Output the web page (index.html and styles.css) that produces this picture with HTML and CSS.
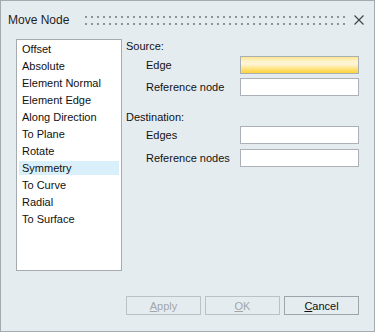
FILE: index.html
```html
<!DOCTYPE html>
<html lang="en">

<head>
    <meta charset="UTF-8">
    <meta name="viewport" content="width=device-width, initial-scale=1.0">
    <title>Move Node</title>
    <link rel="stylesheet" href="styles.css">
</head>

<body>
    <div class="dialog">
        <!-- Title bar with drag grip -->
        <div class="titlebar">
            <span class="title">Move Node</span>
            <div class="grip">
                <div class="grip-row"></div>
                <div class="grip-row"></div>
            </div>
            <button class="close" aria-label="Close">
                <svg width="10" height="10" viewBox="0 0 10 10">
                    <path d="M0.5 0.5 L9.5 9.5 M9.5 0.5 L0.5 9.5" stroke="#3c4247" stroke-width="1.1" fill="none" />
                </svg>
            </button>
        </div>

        <div class="body">
            <ul class="methods">
                <li>Offset</li>
                <li>Absolute</li>
                <li>Element Normal</li>
                <li>Element Edge</li>
                <li>Along Direction</li>
                <li>To Plane</li>
                <li>Rotate</li>
                <li class="selected">Symmetry</li>
                <li>To Curve</li>
                <li>Radial</li>
                <li>To Surface</li>
            </ul>

            <div class="form">
                <div class="group-label">Source:</div>
                <div class="field first">
                    <label>Edge</label>
                    <input type="text" class="active">
                </div>
                <div class="field">
                    <label>Reference node</label>
                    <input type="text">
                </div>

                <div class="group-label dest">Destination:</div>
                <div class="field first-dest">
                    <label>Edges</label>
                    <input type="text">
                </div>
                <div class="field last">
                    <label>Reference nodes</label>
                    <input type="text">
                </div>
            </div>
        </div>

        <div class="footer">
            <button class="btn" disabled><u>A</u>pply</button>
            <button class="btn" disabled><u>O</u>K</button>
            <button class="btn"><u>C</u>ancel</button>
        </div>
    </div>
</body>

</html>
```

FILE: styles.css
```css
body {
    margin: 0;
    font-family: "Liberation Sans", Arial, sans-serif;
    font-size: 11px;
    color: #111;
}

.dialog {
    width: 375px;
    height: 332px;
    box-sizing: border-box;
    border: 1px solid #a3abb1;
    background-color: #e5ecf0;
}

.titlebar {
    display: flex;
    align-items: center;
    height: 38px;
    padding-left: 7px;
}

.title {
    font-size: 12px;
    color: #1e1e1e;
    width: 63px;
}

.grip {
    display: flex;
    flex-direction: column;
    gap: 5px;
    width: 262px;
    margin-left: 14px;
    margin-top: 1px;
}

.grip-row {
    height: 2px;
    background: repeating-linear-gradient(90deg, #8c9399 0 2px, transparent 2px 6px);
}

.close {
    margin-left: auto;
    margin-right: 9px;
    width: 12px;
    height: 12px;
    padding: 0;
    border: none;
    background: none;
    display: flex;
    align-items: center;
    justify-content: center;
}

.body {
    display: flex;
    padding: 0 15px;
}

.methods {
    list-style: none;
    margin: 0;
    padding: 2px 1px;
    width: 106px;
    height: 232px;
    box-sizing: border-box;
    border: 1px solid #a6abb0;
    background-color: white;
}

.methods li {
    height: 14px;
    line-height: 14px;
    margin: 0 1px 3px 1px;
    padding-left: 3px;
    white-space: nowrap;
}

.methods li.selected {
    background-color: #d9f0fa;
}

.form {
    margin-left: 4px;
    flex: 1;
}

.group-label {
    line-height: 14px;
    height: 14px;
}

.group-label.dest {
    margin-top: 14px;
}

.field {
    display: flex;
    align-items: center;
    margin-top: 4px;
}

.field.first {
    margin-top: 3px;
}

.field.first-dest {
    margin-top: 2px;
}

.field.last {
    margin-top: 5px;
}

.field label {
    width: 94px;
    padding-left: 20px;
}

.field input {
    width: 119px;
    height: 18px;
    box-sizing: border-box;
    margin: 0;
    border: 1px solid #abb1b6;
    background-color: white;
    outline: none;
}

.field input.active {
    border-color: #a9b0b5;
    background: linear-gradient(#ffe58f, #fff3c9 25%, #fff6d9 45%, #ffe27a 75%, #ffd33a);
}

.footer {
    display: flex;
    justify-content: flex-end;
    gap: 4px;
    margin-top: 25px;
    padding-right: 15px;
}

.btn {
    width: 75px;
    height: 19px;
    padding: 0;
    font-family: "Liberation Sans", Arial, sans-serif;
    font-size: 11px;
    color: #111;
    background-color: #e5ecf0;
    border: 1px solid #9ea5aa;
}

.btn:disabled {
    color: #a2a6a9;
    border-color: #bcc1c5;
}
```
